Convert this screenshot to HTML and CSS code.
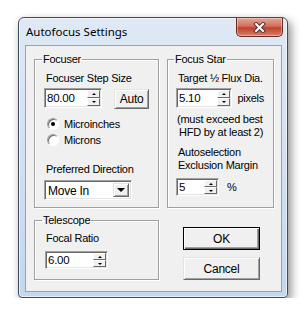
FILE: index.html
```html
<!DOCTYPE html>
<html>
<head>
  <title>Autofocus Settings</title>
  <link rel="stylesheet" href="styles.css">
</head>
<body>
  <div class="window">
    <div class="titlebar">
      <span class="title">Autofocus Settings</span>
      <button class="close">
        <svg width="13" height="11" viewBox="0 0 13 11">
          <path d="M3 2 L10 9 M10 2 L3 9" stroke="#5a3030" stroke-width="4" stroke-linecap="square" fill="none"/>
          <path d="M3 2 L10 9 M10 2 L3 9" stroke="#fff" stroke-width="2" stroke-linecap="square" fill="none"/>
        </svg>
      </button>
    </div>

    <div class="client">
      <fieldset class="group focuser">
        <legend>Focuser</legend>
        <div class="lbl first">Focuser Step Size</div>
        <div class="row">
          <div class="spin">
            <span class="val">80.00</span>
            <span class="arrows"><span class="arr"><i class="up"></i></span><span class="arr"><i class="down"></i></span></span>
          </div>
          <button class="btn auto">Auto</button>
        </div>
        <label class="radio radio-first"><span class="dot checked"></span>Microinches</label>
        <label class="radio"><span class="dot"></span>Microns</label>
        <div class="lbl pref">Preferred Direction</div>
        <div class="combo">
          <span class="val">Move In</span>
          <span class="drop"><i class="tri"></i></span>
        </div>
      </fieldset>

      <fieldset class="group star">
        <legend>Focus Star</legend>
        <div class="lbl first">Target &frac12; Flux Dia.</div>
        <div class="row">
          <div class="spin">
            <span class="val">5.10</span>
            <span class="arrows"><span class="arr"><i class="up"></i></span><span class="arr"><i class="down"></i></span></span>
          </div>
          <span class="unit">pixels</span>
        </div>
        <div class="note">(must exceed best<br><span class="indent">HFD by at least 2)</span></div>
        <div class="note margin-lbl">Autoselection<br>Exclusion Margin</div>
        <div class="row">
          <div class="spin small">
            <span class="val">5</span>
            <span class="arrows"><span class="arr"><i class="up"></i></span><span class="arr"><i class="down"></i></span></span>
          </div>
          <span class="unit pct">%</span>
        </div>
      </fieldset>

      <fieldset class="group scope">
        <legend>Telescope</legend>
        <div class="lbl tight">Focal Ratio</div>
        <div class="spin focal">
          <span class="val">6.00</span>
          <span class="arrows"><span class="arr"><i class="up"></i></span><span class="arr"><i class="down"></i></span></span>
        </div>
      </fieldset>

      <div class="actions">
        <button class="btn big default">OK</button>
        <button class="btn big">Cancel</button>
      </div>
    </div>
  </div>
</body>
</html>
```

FILE: styles.css
```css
body {
  margin: 0;
  background-color: #fff;
  font-family: "Liberation Sans", Arial, sans-serif;
  font-size: 11px;
  letter-spacing: -0.25px;
  color: #000;
}
.window {
  margin: 17px 0 0 18px;
  width: 270px;
  height: 281px;
  box-sizing: border-box;
  border: 1px solid #3e4b5c;
  border-radius: 6px 6px 4px 4px;
  background: linear-gradient(#dfe9f5, #c3d7ee);
  box-shadow: 3px 4px 10px rgba(0, 0, 0, 0.45), inset 0 0 0 1px rgba(255, 255, 255, 0.6);
  display: flex;
  flex-direction: column;
  padding: 0 5px 5px 6px;
}
.titlebar {
  height: 27px;
  flex: none;
  display: flex;
  align-items: flex-start;
}
.title {
  flex: 1;
  font-family: "Noto Sans", sans-serif;
  font-size: 11.5px;
  letter-spacing: 0;
  line-height: 15px;
  margin: 6px 0 0 1px;
}
.close {
  width: 47px;
  height: 19px;
  margin-right: -1px;
  padding: 0;
  border: 1px solid #6b2a22;
  border-top: none;
  border-radius: 0 0 5px 5px;
  background: linear-gradient(#e8a596, #d0705c 45%, #c0402a 55%, #d4826c);
  box-shadow: inset 0 0 0 1px rgba(255, 255, 255, 0.35);
  display: flex;
  align-items: center;
  justify-content: center;
}

.client {
  flex: 1;
  border: 1px solid #8fa4bd;
  background-color: #f0f0f0;
  display: grid;
  grid-template-columns: 125px 107px;
  grid-template-rows: 156px 67px;
  column-gap: 8px;
  row-gap: 5px;
  padding: 6px 0 0 8px;
  align-content: start;
}

/* group boxes */
.group {
  margin: 0;
  padding: 0 9px;
  min-width: 0;
  box-sizing: border-box;
  border: 1px solid #a0a0a0;
  box-shadow: inset 1px 1px #fff, 1px 1px #fff;
}
.group legend {
  padding: 0 1px;
  margin-left: -2px;
  line-height: 14px;
}
.star {
  padding-left: 8px;
}
.lbl {
  line-height: 14px;
  padding-left: 2px;
}
.lbl.first {
  margin-top: 5px;
}
.lbl.tight {
  margin-top: 4px;
}
.lbl.pref {
  margin-top: 15px;
}
.row {
  display: flex;
  align-items: flex-start;
  margin-top: 3px;
}

/* spin edit */
.spin {
  width: 59px;
  height: 20px;
  box-sizing: border-box;
  display: flex;
  background-color: #fff;
  border: 1px solid;
  border-color: #a0a0a0 #fff #fff #a0a0a0;
  box-shadow: inset 1px 1px #696969, inset -1px -1px #e3e3e3;
  padding: 1px;
}
.spin .val {
  flex: 1;
  padding-left: 1px;
  line-height: 16px;
  font-size: 11.5px;
}
.spin.small {
  width: 43px;
  height: 18px;
}
.spin.small .val {
  line-height: 14px;
}
.spin.focal {
  width: 63px;
  height: 18px;
  margin: 6px 0 0 1px;
}
.spin.focal .val {
  line-height: 14px;
}
.arrows {
  width: 13px;
  display: flex;
  flex-direction: column;
}
.arr {
  flex: 1;
  box-sizing: border-box;
  border: 1px solid;
  border-color: #fff #696969 #696969 #fff;
  background-color: #f0f0f0;
  display: flex;
  align-items: center;
  justify-content: center;
}
.arr i {
  width: 0;
  height: 0;
  border-left: 2px solid transparent;
  border-right: 2px solid transparent;
}
.arr .up {
  border-bottom: 2px solid #000;
}
.arr .down {
  border-top: 2px solid #000;
}

/* buttons */
.btn {
  font-family: inherit;
  font-size: 11px;
  letter-spacing: -0.25px;
  color: #000;
  padding: 0;
  background-color: #f0f0f0;
  border: 1px solid;
  border-color: #e3e3e3 #696969 #696969 #e3e3e3;
  box-shadow: inset 1px 1px #fff, inset -1px -1px #a0a0a0;
}
.btn.auto {
  width: 35px;
  height: 20px;
  margin: 1px 0 0 12px;
  font-size: 12px;
}
.btn.big {
  width: 77px;
  height: 23px;
  font-size: 12px;
}
.btn.default {
  border-color: #000;
  box-shadow: inset 1px 1px #fff, inset -1px -1px #696969, inset -2px -2px #a0a0a0;
}

/* radios */
.radio {
  display: flex;
  align-items: center;
  line-height: 14px;
  margin-top: 2px;
  padding-left: 3px;
}
.radio-first {
  margin-top: 8px;
}
.dot {
  width: 12px;
  height: 12px;
  box-sizing: border-box;
  border-radius: 50%;
  border: 1px solid;
  border-color: #a0a0a0 #fff #fff #a0a0a0;
  box-shadow: inset 1px 1px #696969;
  background-color: #fff;
  margin-right: 5px;
  display: flex;
  align-items: center;
  justify-content: center;
}
.dot.checked::after {
  content: "";
  width: 4px;
  height: 4px;
  border-radius: 50%;
  background-color: #000;
}

/* combo box */
.combo {
  margin-top: 4px;
  width: 88px;
  height: 20px;
  box-sizing: border-box;
  display: flex;
  background-color: #fff;
  border: 1px solid;
  border-color: #a0a0a0 #fff #fff #a0a0a0;
  box-shadow: inset 1px 1px #696969, inset -1px -1px #e3e3e3;
  padding: 2px;
}
.combo .val {
  flex: 1;
  line-height: 16px;
  font-size: 12px;
  padding-left: 1px;
}
.drop {
  width: 16px;
  box-sizing: border-box;
  border: 1px solid;
  border-color: #e3e3e3 #696969 #696969 #e3e3e3;
  box-shadow: inset 1px 1px #fff, inset -1px -1px #a0a0a0;
  background-color: #f0f0f0;
  display: flex;
  align-items: center;
  justify-content: center;
}
.tri {
  width: 0;
  height: 0;
  border-left: 4px solid transparent;
  border-right: 4px solid transparent;
  border-top: 4px solid #000;
}

.unit {
  line-height: 20px;
  margin-left: 5px;
}
.unit.pct {
  line-height: 18px;
  margin-left: 8px;
}
.note {
  line-height: 13px;
  margin-top: 5px;
  padding-left: 1px;
}
.note .indent {
  padding-left: 2px;
}
.note.margin-lbl {
  margin-top: 7px;
  padding-left: 2px;
}
.star .row:last-child {
  margin-top: 6px;
}

.actions {
  display: flex;
  flex-direction: column;
  gap: 7px;
  padding: 14px 0 0 16px;
}
```
